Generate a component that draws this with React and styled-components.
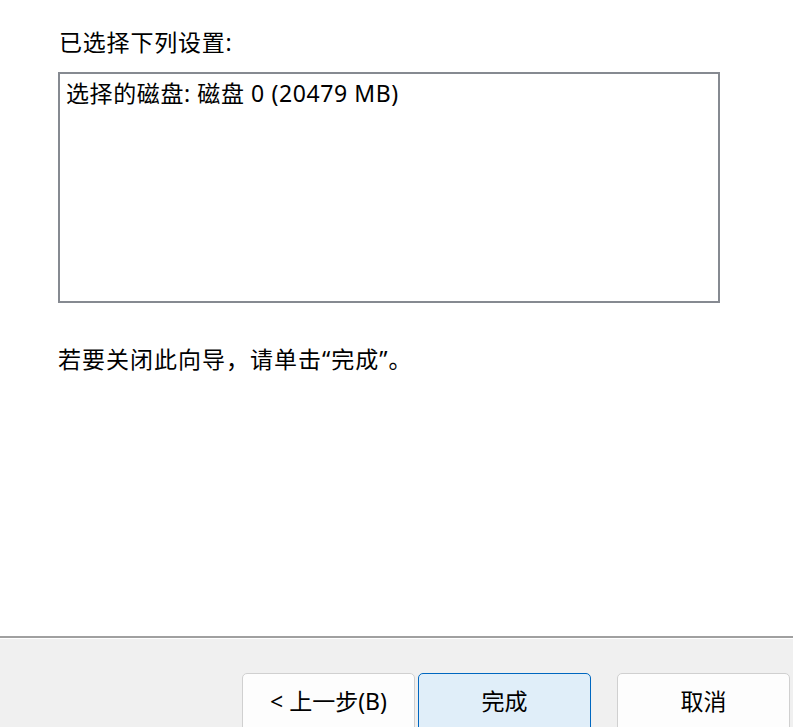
import styled, { createGlobalStyle } from "styled-components";

const font = `"Noto Sans", "Noto Sans CJK SC", sans-serif`;

const GlobalStyle = createGlobalStyle`
  html, body {
    margin: 0;
    padding: 0;
    background: #ffffff;
  }
  body {
    font-family: ${font};
    color: #000;
  }
`;

export default function App() {
  return (
    <>
      <GlobalStyle />
      <Window>
        <Content>
          <Label>已选择下列设置:</Label>
          <SummaryBox>
            <SummaryLine>选择的磁盘: 磁盘 0 (20479 MB)</SummaryLine>
          </SummaryBox>
          <Hint>若要关闭此向导，请单击“完成”。</Hint>
        </Content>
        <Footer>
          <ButtonRow>
            <Button>&lt; 上一步(B)</Button>
            <Button $primary>完成</Button>
            <Button $spaced>取消</Button>
          </ButtonRow>
        </Footer>
      </Window>
    </>
  );
}

const Window = styled.div`
  height: 100vh;
  display: flex;
  flex-direction: column;
  overflow: hidden;
`;

const Content = styled.div`
  flex: 1;
  padding: 26px 0 0 58px;
  display: flex;
  flex-direction: column;
`;

const Label = styled.div`
  font-size: 23px;
  line-height: 32px;
  letter-spacing: 0.8px;
  padding-left: 1px;
`;

const SummaryBox = styled.div`
  margin-top: 14px;
  width: 662px;
  height: 231px;
  border: 2px solid #868a91;
  background: #fff;
  padding: 3px 6px;
  box-sizing: border-box;
`;

const SummaryLine = styled.div`
  font-size: 23px;
  line-height: 32px;
  letter-spacing: 0.6px;
`;

const Hint = styled.div`
  margin-top: 40px;
  font-size: 23px;
  line-height: 32px;
  letter-spacing: 1px;
`;

const Footer = styled.div`
  height: 91px;
  box-sizing: border-box;
  border-top: 2px solid #a0a0a0;
  background: #f0f0f0;
  box-shadow: inset 0 1px 0 #ffffff;
  padding: 35px 3px 0 0;
`;

const ButtonRow = styled.div`
  display: flex;
  justify-content: flex-end;
  gap: 3px;
`;

const Button = styled.button`
  width: 173px;
  height: 60px;
  margin-left: ${(p) => (p.$spaced ? "23px" : "0")};
  font-family: ${font};
  font-size: 23px;
  color: #000;
  background: ${(p) => (p.$primary ? "#e0eef9" : "#fdfdfd")};
  border: 1px solid ${(p) => (p.$primary ? "#0067c0" : "#d0d0d0")};
  border-radius: 5px;
  padding: 0 0 6px;
  cursor: pointer;
`;
